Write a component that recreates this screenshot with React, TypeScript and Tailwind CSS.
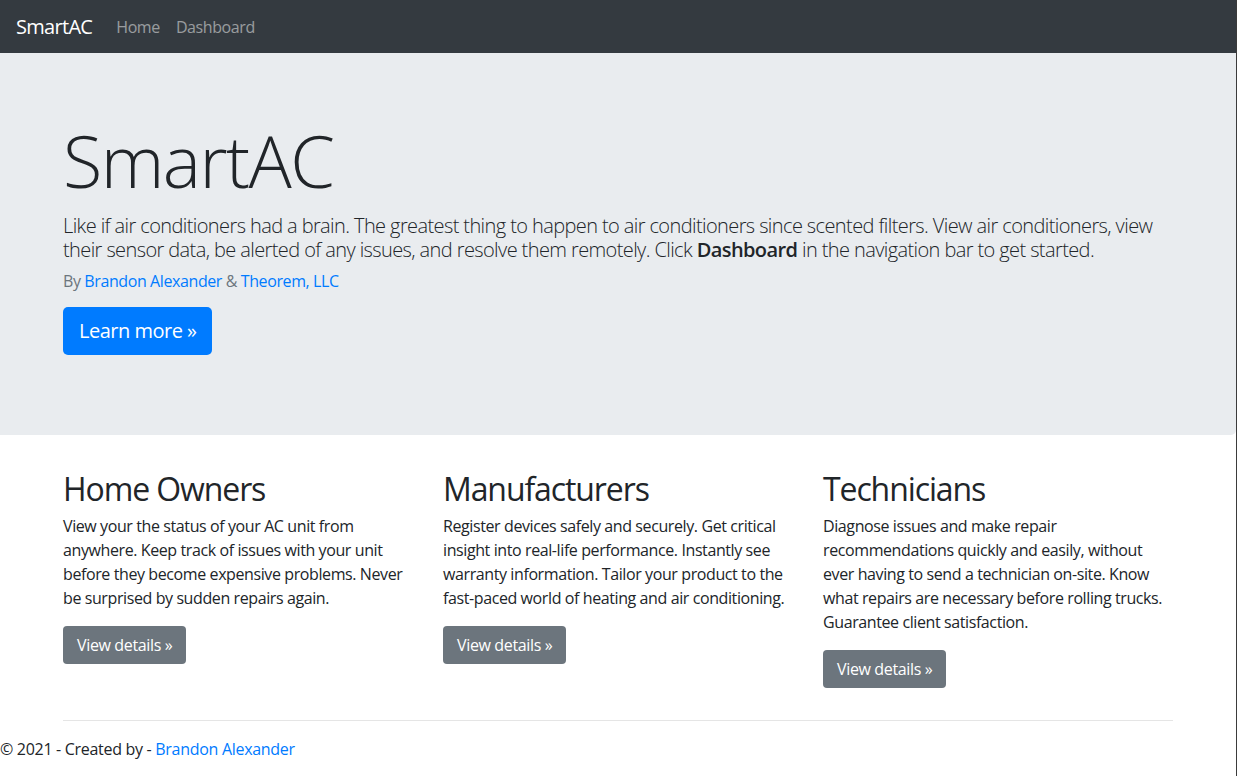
import React from "react";

const font = { fontFamily: '"Open Sans", "Noto Sans", sans-serif' };

function Col({ title, lines }: { title: string; lines: string[] }) {
  return (
    <div className="w-[380px] pr-[10px]">
      <h2 className="text-[32px] leading-[38px] font-normal text-[#212529] mt-[1px] mb-[6px] tracking-[-1.1px]">{title}</h2>
      <p className="text-[16px] leading-[24px] text-[#212529] mb-[16px] tracking-[-0.4px]">
        {lines.map((l, i) => (
          <span key={i} className="block whitespace-nowrap">{l}</span>
        ))}
      </p>
      <a className="inline-flex items-center h-[38px] px-[14px] rounded-[4px] bg-[#6c757d] text-white text-[16px] tracking-[-0.35px]">View details »</a>
    </div>
  );
}

export default function App() {
  return (
    <div className="w-[1237px] min-h-[776px] bg-white flex" style={font}>
      <div className="w-[1236px]">
        <nav className="h-[53px] bg-[#343a40] flex items-center px-[16px]">
          <span className="text-white text-[20px] tracking-[-0.7px] mr-[24px]">SmartAC</span>
          <span className="text-[rgba(255,255,255,0.5)] text-[16px] tracking-[-0.4px] mr-[16px]">Home</span>
          <span className="text-[rgba(255,255,255,0.5)] text-[16px] tracking-[-0.4px]">Dashboard</span>
        </nav>
        <section className="bg-[#e9ecef] rounded-br-[5px] h-[382px] pt-[64px] pl-[63px]">
          <h1 className="text-[72px] leading-[86px] font-light text-[#212529] tracking-[-1.5px]">SmartAC</h1>
          <p className="mt-[11px] text-[20px] leading-[24px] font-light text-[#212529] tracking-[-0.6px]">
            <span className="block whitespace-nowrap">Like if air conditioners had a brain. The greatest thing to happen to air conditioners since scented filters. View air conditioners, view</span>
            <span className="block whitespace-nowrap">their sensor data, be alerted of any issues, and resolve them remotely. Click <b className="font-semibold">Dashboard</b> in the navigation bar to get started.</span>
          </p>
          <p className="mt-[7px] text-[16px] leading-[24px] text-[#6c757d] tracking-[-0.4px]">
            By <span className="text-[#007bff]">Brandon Alexander</span> &amp; <span className="text-[#007bff]">Theorem, LLC</span>
          </p>
          <a className="mt-[14px] inline-flex items-center h-[48px] px-[16px] rounded-[5px] bg-[#007bff] text-white text-[20px] tracking-[-0.5px]">Learn more »</a>
        </section>
        <div className="pl-[63px] pt-[34px] flex">
          <Col title="Home Owners" lines={["View your the status of your AC unit from", "anywhere. Keep track of issues with your unit", "before they become expensive problems. Never", "be surprised by sudden repairs again."]} />
          <Col title="Manufacturers" lines={["Register devices safely and securely. Get critical", "insight into real-life performance. Instantly see", "warranty information. Tailor your product to the", "fast-paced world of heating and air conditioning."]} />
          <Col title="Technicians" lines={["Diagnose issues and make repair", "recommendations quickly and easily, without", "ever having to send a technician on-site. Know", "what repairs are necessary before rolling trucks.", "Guarantee client satisfaction."]} />
        </div>
        <hr className="ml-[63px] w-[1110px] mt-[32px] border-t border-[rgba(0,0,0,0.1)]" />
        <footer className="pt-[16px] text-[16px] leading-[24px] text-[#212529] tracking-[-0.3px]">
          © 2021 - Created by - <span className="text-[#007bff]">Brandon Alexander</span>
        </footer>
      </div>
      <div className="w-[1px] bg-[#3b3b3b]" />
    </div>
  );
}
